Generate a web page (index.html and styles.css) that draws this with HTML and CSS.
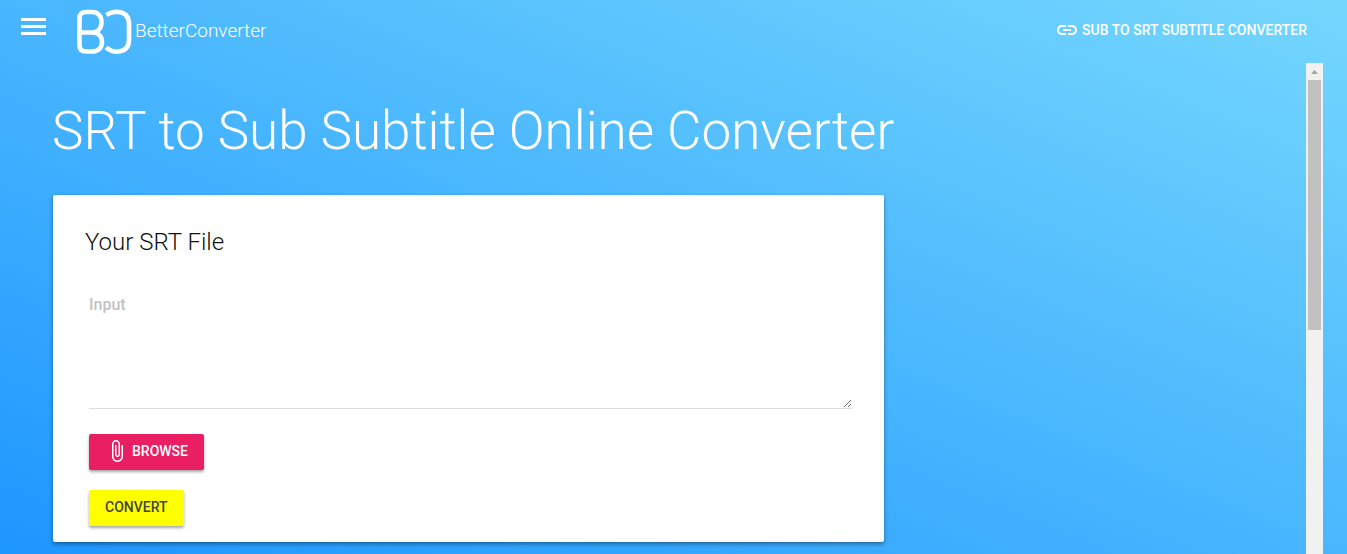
FILE: index.html
```
<!DOCTYPE html>
<html lang="en">
<head>
  <meta charset="UTF-8">
  <meta name="viewport" content="width=device-width, initial-scale=1.0">
  <title>SRT to Sub Subtitle Online Converter</title>
  <link rel="stylesheet" href="styles.css">
</head>
<body>
  <header class="toolbar">
    <button type="button" class="menu-btn" aria-label="Menu">
      <svg width="25" height="18" viewBox="0 0 25 18" fill="#fff">
        <rect width="25" height="3"/>
        <rect y="7" width="25" height="3"/>
        <rect y="14" width="25" height="3"/>
      </svg>
    </button>
    <a href="#" class="logo">
      <svg width="56" height="46" viewBox="0 0 56 46" fill="none" stroke="#fff" stroke-width="4.6">
        <path d="M16 23.5C22 23.5 25.5 19 25.5 13S22 3 16 3H10Q3.5 3 3.5 9.5V36Q3.5 42.5 10 42.5H16C22 42.5 26 39 26 33S22 23.5 16 23.5H3.5"/>
        <path d="M30.5 6Q35 2.8 41 2.8Q53 3.5 53 15V31Q53 42 41 42.7Q35 42.7 30 38.5"/>
      </svg>
      <span>BetterConverter</span>
    </a>
    <a href="#" class="nav-link">
      <svg width="24" height="24" viewBox="0 0 24 24" fill="#fff">
        <path d="M3.9 12c0-1.71 1.39-3.1 3.1-3.1h4V7H7c-2.76 0-5 2.24-5 5s2.24 5 5 5h4v-1.9H7c-1.71 0-3.1-1.39-3.1-3.1zM8 13h8v-2H8v2zm9-6h-4v1.9h4c1.71 0 3.1 1.39 3.1 3.1s-1.39 3.1-3.1 3.1h-4V17h4c2.76 0 5-2.24 5-5s-2.24-5-5-5z"/>
      </svg>
      Sub to SRT Subtitle Converter
    </a>
  </header>

  <div class="page">
    <main class="content">
      <h1>SRT to Sub Subtitle Online Converter</h1>

      <form class="card">
        <h2>Your SRT File</h2>

        <div class="field">
          <textarea id="srtInput" placeholder="Input" aria-label="Input"></textarea>
        </div>

        <button type="button" class="btn btn-browse" id="browseBtn">
          <svg width="24" height="24" viewBox="0 0 24 24" fill="#fff">
            <path d="M16.5 6v11.5c0 2.21-1.79 4-4 4s-4-1.79-4-4V5c0-1.38 1.12-2.5 2.5-2.5s2.5 1.12 2.5 2.5v10.5c0 .55-.45 1-1 1s-1-.45-1-1V6H10v9.5c0 1.38 1.12 2.5 2.5 2.5s2.5-1.12 2.5-2.5V5c0-2.21-1.79-4-4-4S7 2.79 7 5v12.5c0 3.04 2.46 5.5 5.5 5.5s5.5-2.46 5.5-5.5V6h-1.5z"/>
          </svg>
          Browse
        </button>
        <button type="button" class="btn btn-convert" id="convertBtn">Convert</button>
      </form>
    </main>

    <div class="scrollbar" aria-hidden="true">
      <div class="scroll-arrow"></div>
      <div class="scroll-thumb"></div>
    </div>
  </div>
</body>
</html>
```
FILE: styles.css
```
* {
  box-sizing: border-box;
}

body {
  font-family: Roboto, sans-serif;
  margin: 0;
  height: 100vh;
  display: flex;
  flex-direction: column;
  overflow: hidden;
  color: #fff;
  background: linear-gradient(to top right, #1e96ff, #74d7fd);
}

h1,
h2 {
  margin: 0;
  font-weight: 300;
}

.toolbar {
  display: flex;
  flex: none;
  align-items: flex-start;
  height: 63px;
  padding: 9px 40px 0 21px;
}

.menu-btn {
  margin: 9px 30px 0 0;
  padding: 0;
  border: 0;
  background: none;
  line-height: 0;
  cursor: pointer;
}

.logo {
  display: flex;
  align-items: center;
  gap: 3px;
  color: #fff;
  font-size: 19px;
  font-weight: 300;
  line-height: 44px;
  text-decoration: none;
}

.logo span {
  padding-bottom: 2px;
}

.nav-link {
  display: flex;
  align-items: center;
  gap: 3px;
  margin: 9px 0 0 auto;
  color: #fff;
  font-size: 14px;
  font-weight: 500;
  text-decoration: none;
  text-transform: uppercase;
}

.page {
  display: flex;
  flex: 1;
  min-height: 0;
  padding-right: 24px;
}

.content {
  flex: 1;
  padding: 36px 8px 12px 52px;
}

h1 {
  margin-bottom: 32px;
  font-size: 53px;
  line-height: 64px;
}

.card {
  display: flex;
  flex-direction: column;
  align-items: flex-start;
  width: calc(100% * 2 / 3);
  margin-left: 1px;
  padding: 31px 32px 16px;
  border-radius: 2px;
  background: #fff;
  box-shadow: 0 2px 4px rgba(0, 0, 0, 0.4);
}

h2 {
  color: #111;
  font-size: 24px;
  line-height: 32px;
}

.field {
  align-self: stretch;
  margin: 30px 0 25px 4px;
  line-height: 0;
}

textarea {
  width: 100%;
  height: 121px;
  padding: 7px 0;
  border: 0;
  border-bottom: 1px solid #ddd;
  outline: none;
  background: none;
  font: 500 16px/20px Roboto, sans-serif;
  resize: vertical;
}

textarea::placeholder {
  color: #c2c2c2;
  opacity: 1;
}

.btn {
  display: flex;
  align-items: center;
  gap: 3px;
  height: 36px;
  margin-left: 4px;
  padding: 0 16px 2px;
  border: 0;
  border-radius: 2px;
  box-shadow: 0 2px 3px rgba(0, 0, 0, 0.35);
  font: 500 14px/20px Roboto, sans-serif;
  text-transform: uppercase;
  cursor: pointer;
}

.btn-browse {
  margin-bottom: 20px;
  background: #e91e63;
  color: #fff;
}

.btn-convert {
  background: #ff0;
  color: #444;
}

.scrollbar {
  width: 17px;
  padding: 0 2px;
  background: #f1f1f1;
}

.scroll-arrow {
  width: 7px;
  height: 17px;
  margin: 0 auto;
  background: #a3a3a3;
  clip-path: polygon(50% 7px, 100% 11px, 0 11px);
}

.scroll-thumb {
  height: 51%;
  background: #c1c1c1;
}
```
